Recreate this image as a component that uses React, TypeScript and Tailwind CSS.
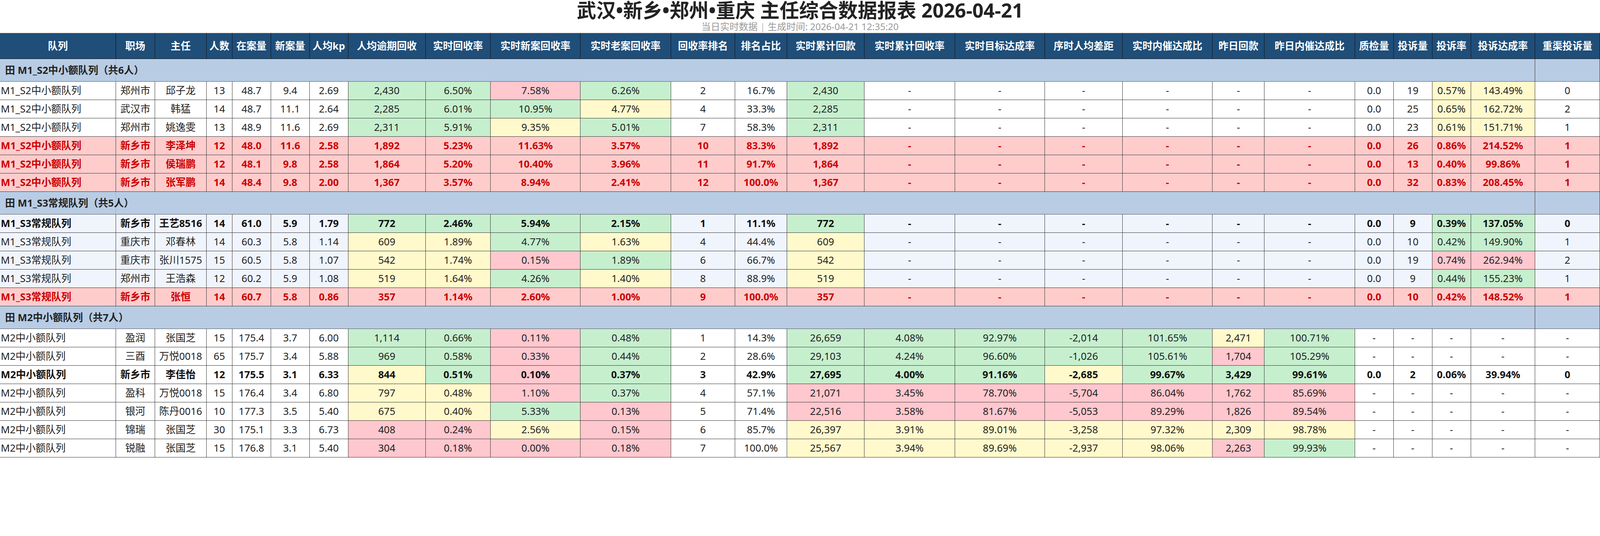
import React from 'react';

/**
 * 主任综合数据报表
 * Wide Excel-like report table, grouped by 队列
 */

type RowKind = 'normal' | 'bold' | 'red';

interface DataRow {
  kind: RowKind;
  cells: string[];
}

interface Group {
  label: string;
  tint: 'white' | 'blue';
  rows: DataRow[];
}

// column widths as share of the full page width
const columns = [
  { label: '队列', w: 'w-[7.25%]' },
  { label: '职场', w: 'w-[2.4375%]' },
  { label: '主任', w: 'w-[3.2292%]' },
  { label: '人数', w: 'w-[1.6042%]' },
  { label: '在案量', w: 'w-[2.4167%]' },
  { label: '新案量', w: 'w-[2.4167%]' },
  { label: '人均kp', w: 'w-[2.4167%]' },
  { label: '人均逾期回收', w: 'w-[4.8333%]' },
  { label: '实时回收率', w: 'w-[4.0625%]' },
  { label: '实时新案回收率', w: 'w-[5.625%]' },
  { label: '实时老案回收率', w: 'w-[5.6458%]' },
  { label: '回收率排名', w: 'w-[4.0208%]' },
  { label: '排名占比', w: 'w-[3.2292%]' },
  { label: '实时累计回款', w: 'w-[4.8542%]' },
  { label: '实时累计回收率', w: 'w-[5.6458%]' },
  { label: '实时目标达成率', w: 'w-[5.625%]' },
  { label: '序时人均差距', w: 'w-[4.8542%]' },
  { label: '实时内催达成比', w: 'w-[5.625%]' },
  { label: '昨日回款', w: 'w-[3.25%]' },
  { label: '昨日内催达成比', w: 'w-[5.6458%]' },
  { label: '质检量', w: 'w-[2.4167%]' },
  { label: '投诉量', w: 'w-[2.4167%]' },
  { label: '投诉率', w: 'w-[2.4167%]' },
  { label: '投诉达成率', w: 'w-[4.0208%]' },
  { label: '重渠投诉量', w: 'w-[4.0417%]' },
];

const D6 = ['-', '-', '-', '-', '-', '-'];
const D5 = ['-', '-', '-', '-', '-'];

const groups: Group[] = [
  {
    label: '田 M1_S2中小额队列（共6人）',
    tint: 'white',
    rows: [
      { kind: 'normal', cells: ['M1_S2中小额队列', '郑州市', '邱子龙', '13', '48.7', '9.4', '2.69', 'g|2,430', 'g|6.50%', 'p|7.58%', 'g|6.26%', '2', '16.7%', 'g|2,430', ...D6, '0.0', '19', 'y|0.57%', 'y|143.49%', '0'] },
      { kind: 'normal', cells: ['M1_S2中小额队列', '武汉市', '韩猛', '14', '48.7', '11.1', '2.64', 'g|2,285', 'g|6.01%', 'g|10.95%', 'y|4.77%', '4', '33.3%', 'g|2,285', ...D6, '0.0', '25', 'y|0.65%', 'y|162.72%', '2'] },
      { kind: 'normal', cells: ['M1_S2中小额队列', '郑州市', '姚逸雯', '13', '48.9', '11.6', '2.69', 'g|2,311', 'g|5.91%', 'y|9.35%', 'g|5.01%', '7', '58.3%', 'g|2,311', ...D6, '0.0', '23', 'y|0.61%', 'y|151.71%', '1'] },
      { kind: 'red', cells: ['M1_S2中小额队列', '新乡市', '李泽坤', '12', '48.0', '11.6', '2.58', '1,892', '5.23%', '11.63%', '3.57%', '10', '83.3%', '1,892', ...D6, '0.0', '26', '0.86%', '214.52%', '1'] },
      { kind: 'red', cells: ['M1_S2中小额队列', '新乡市', '侯瑞鹏', '12', '48.1', '9.8', '2.58', '1,864', '5.20%', '10.40%', '3.96%', '11', '91.7%', '1,864', ...D6, '0.0', '13', '0.40%', '99.86%', '1'] },
      { kind: 'red', cells: ['M1_S2中小额队列', '新乡市', '张军鹏', '14', '48.4', '9.8', '2.00', '1,367', '3.57%', '8.94%', '2.41%', '12', '100.0%', '1,367', ...D6, '0.0', '32', '0.83%', '208.45%', '1'] },
    ],
  },
  {
    label: '田 M1_S3常规队列（共5人）',
    tint: 'blue',
    rows: [
      { kind: 'bold', cells: ['M1_S3常规队列', '新乡市', '王艺8516', '14', '61.0', '5.9', '1.79', 'g|772', 'g|2.46%', 'g|5.94%', 'g|2.15%', '1', '11.1%', 'g|772', ...D6, '0.0', '9', 'g|0.39%', 'g|137.05%', '0'] },
      { kind: 'normal', cells: ['M1_S3常规队列', '重庆市', '邓春林', '14', '60.3', '5.8', '1.14', 'y|609', 'y|1.89%', 'g|4.77%', 'y|1.63%', '4', '44.4%', 'y|609', ...D6, '0.0', '10', 'g|0.42%', 'g|149.90%', '1'] },
      { kind: 'normal', cells: ['M1_S3常规队列', '重庆市', '张川1575', '15', '60.5', '5.8', '1.07', 'y|542', 'y|1.74%', 'p|0.15%', 'g|1.89%', '6', '66.7%', 'y|542', ...D6, '0.0', '19', 'p|0.74%', 'p|262.94%', '2'] },
      { kind: 'normal', cells: ['M1_S3常规队列', '郑州市', '王浩森', '12', '60.2', '5.9', '1.08', 'y|519', 'y|1.64%', 'g|4.26%', 'y|1.40%', '8', '88.9%', 'y|519', ...D6, '0.0', '9', 'g|0.44%', 'g|155.23%', '1'] },
      { kind: 'red', cells: ['M1_S3常规队列', '新乡市', '张恒', '14', '60.7', '5.8', '0.86', '357', '1.14%', '2.60%', '1.00%', '9', '100.0%', '357', ...D6, '0.0', '10', '0.42%', '148.52%', '1'] },
    ],
  },
  {
    label: '田 M2中小额队列（共7人）',
    tint: 'white',
    rows: [
      { kind: 'normal', cells: ['M2中小额队列', '盈润', '张国芝', '15', '175.4', '3.7', '6.00', 'g|1,114', 'g|0.66%', 'p|0.11%', 'g|0.48%', '1', '14.3%', 'g|26,659', 'g|4.08%', 'g|92.97%', 'g|-2,014', 'g|101.65%', 'y|2,471', 'g|100.71%', ...D5] },
      { kind: 'normal', cells: ['M2中小额队列', '三酉', '万悦0018', '65', '175.7', '3.4', '5.88', 'g|969', 'g|0.58%', 'p|0.33%', 'g|0.44%', '2', '28.6%', 'g|29,103', 'g|4.24%', 'g|96.60%', 'g|-1,026', 'g|105.61%', 'p|1,704', 'g|105.29%', ...D5] },
      { kind: 'bold', cells: ['M2中小额队列', '新乡市', '李佳怡', '12', '175.5', '3.1', '6.33', 'y|844', 'g|0.51%', 'p|0.10%', 'g|0.37%', '3', '42.9%', 'g|27,695', 'g|4.00%', 'g|91.16%', 'y|-2,685', 'g|99.67%', 'g|3,429', 'g|99.61%', '0.0', '2', '0.06%', '39.94%', '0'] },
      { kind: 'normal', cells: ['M2中小额队列', '盈科', '万悦0018', '15', '176.4', '3.4', '6.80', 'y|797', 'y|0.48%', 'p|1.10%', 'g|0.37%', '4', '57.1%', 'p|21,071', 'p|3.45%', 'p|78.70%', 'p|-5,704', 'p|86.04%', 'p|1,762', 'p|85.69%', ...D5] },
      { kind: 'normal', cells: ['M2中小额队列', '银河', '陈丹0016', '10', '177.3', '3.5', '5.40', 'y|675', 'y|0.40%', 'g|5.33%', 'p|0.13%', '5', '71.4%', 'p|22,516', 'p|3.58%', 'p|81.67%', 'p|-5,053', 'p|89.29%', 'p|1,826', 'p|89.54%', ...D5] },
      { kind: 'normal', cells: ['M2中小额队列', '锦瑞', '张国芝', '30', '175.1', '3.3', '6.73', 'p|408', 'p|0.24%', 'y|2.56%', 'p|0.15%', '6', '85.7%', 'y|26,397', 'y|3.91%', 'y|89.01%', 'y|-3,258', 'y|97.32%', 'y|2,309', 'y|98.78%', ...D5] },
      { kind: 'normal', cells: ['M2中小额队列', '锐融', '张国芝', '15', '176.8', '3.1', '5.40', 'p|304', 'p|0.18%', 'p|0.00%', 'p|0.18%', '7', '100.0%', 'y|25,567', 'y|3.94%', 'y|89.69%', 'y|-2,937', 'y|98.06%', 'p|2,263', 'g|99.93%', ...D5] },
    ],
  },
];

const toneBg: Record<string, string> = {
  g: 'bg-[#c6efce]',
  y: 'bg-[#fff9cc]',
  p: 'bg-[#ffc7ce]',
};

const tintBg = {
  white: 'bg-white',
  blue: 'bg-[#f0f4fc]',
};

const kindText: Record<RowKind, string> = {
  normal: 'font-normal text-[#222]',
  bold: 'font-bold text-[#111]',
  red: 'font-bold text-[#cc0000]',
};

function ReportRow({ row, tint }: { row: DataRow; tint: 'white' | 'blue' }) {
  return (
    <tr className="h-[47px]">
      {row.cells.map((raw, i) => {
        const hasTone = raw.includes('|');
        const tone = hasTone ? raw.split('|')[0] : '';
        const text = hasTone ? raw.split('|')[1] : raw;
        const bg = row.kind === 'red' ? 'bg-[#ffcccc]' : tone ? toneBg[tone] : tintBg[tint];
        return (
          <td
            key={i}
            className={`${bg} ${kindText[row.kind]} border-r border-b border-[#333] whitespace-nowrap overflow-hidden p-0 align-middle ${
              i === 0 ? 'text-left pl-[2px]' : 'text-center'
            }`}
          >
            {text}
          </td>
        );
      })}
    </tr>
  );
}

export default function App() {
  return (
    <div className="w-full bg-white font-['Noto_Sans','Noto_Sans_CJK_SC',sans-serif]">
      {/* Title */}
      <div className="text-center">
        <h1 className="text-[50px] leading-[53px] font-bold text-[#222]">
          武汉•新乡•郑州•重庆 主任综合数据报表 2026-04-21
        </h1>
        <p className="text-[24px] leading-[29px] text-[#999] mb-[2px]">
          当日实时数据 <span className="text-[#bbb]">|</span> 生成时间: 2026-04-21 12:35:20
        </p>
      </div>

      {/* Table */}
      <table className="w-full table-fixed border-separate border-spacing-0 text-[25.6px] leading-[1.3]">
        <colgroup>
          {columns.map((c) => (
            <col key={c.label} className={c.w} />
          ))}
        </colgroup>
        <thead>
          <tr className="h-[67px]">
            {columns.map((c) => (
              <th
                key={c.label}
                className="bg-[#1f4e79] text-white font-bold text-center whitespace-nowrap overflow-hidden border-t border-t-[#aaa] border-r border-b border-[#111] p-0"
              >
                {c.label}
              </th>
            ))}
          </tr>
        </thead>
        <tbody>
          {groups.map((g) => (
            <React.Fragment key={g.label}>
              <tr className="h-[58px]">
                <td className="bg-[#b8cce4] border-r border-r-[#9fb3cc] border-b border-b-[#555] whitespace-nowrap pl-[13px] font-bold text-[#222] align-middle">
                  {g.label}
                </td>
                <td colSpan={23} className="bg-[#b8cce4] border-r border-r-[#333] border-b border-b-[#555]" />
                <td className="bg-[#b8cce4] border-b border-b-[#555] border-r border-r-[#333]" />
              </tr>
              {g.rows.map((r, idx) => (
                <ReportRow key={idx} row={r} tint={g.tint} />
              ))}
            </React.Fragment>
          ))}
        </tbody>
      </table>
    </div>
  );
}
